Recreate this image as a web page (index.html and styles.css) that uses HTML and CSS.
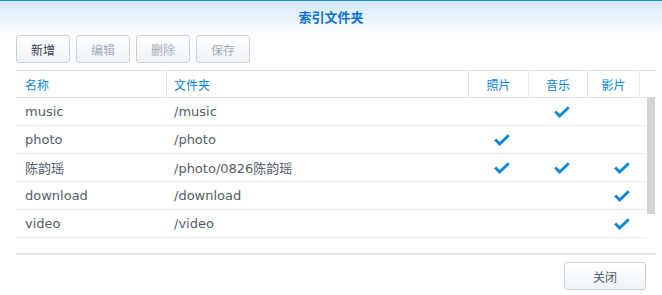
FILE: index.html
```html
<!DOCTYPE html>
<html lang="zh-CN">
<head>
    <meta charset="UTF-8">
    <title>索引文件夹</title>
    <link rel="stylesheet" href="styles.css">
</head>
<body>
    <div class="dialog">
        <div class="dialog-title">索引文件夹</div>
        <div class="toolbar">
            <button class="btn">新增</button>
            <button class="btn" disabled>编辑</button>
            <button class="btn" disabled>删除</button>
            <button class="btn" disabled>保存</button>
        </div>
        <div class="grid">
            <div class="grid-head">
                <div class="cell col-name">名称</div>
                <div class="cell col-folder">文件夹</div>
                <div class="cell col-photo center">照片</div>
                <div class="cell col-music center">音乐</div>
                <div class="cell col-video center">影片</div>
                <div class="cell col-fill"></div>
            </div>
            <div class="grid-body">
                <div class="rows" id="rows"></div>
                <div class="scroll-track"><div class="scroll-thumb"></div></div>
            </div>
        </div>
        <div class="footer">
            <button class="btn btn-wide">关闭</button>
        </div>
    </div>
    <script>
        const folders = [
            { name: 'music', path: '/music', photo: false, music: true, video: false },
            { name: 'photo', path: '/photo', photo: true, music: false, video: false },
            { name: '陈韵瑶', path: '/photo/0826陈韵瑶', photo: true, music: true, video: true },
            { name: 'download', path: '/download', photo: false, music: false, video: true },
            { name: 'video', path: '/video', photo: false, music: false, video: true }
        ];
        const tick = '<svg class="tick" width="16" height="12" viewBox="0 0 16 12"><polyline points="1.2,5.6 5.6,10 14.8,1.2" fill="none" stroke="#0a84e0" stroke-width="2.8" stroke-linejoin="miter"/></svg>';
        const rows = document.getElementById('rows');
        folders.forEach(f => {
            const row = document.createElement('div');
            row.className = 'row';
            row.innerHTML = `<div class="cell col-name">${f.name}</div>` +
                `<div class="cell col-folder">${f.path}</div>` +
                `<div class="cell col-photo check">${f.photo ? tick : ''}</div>` +
                `<div class="cell col-music check">${f.music ? tick : ''}</div>` +
                `<div class="cell col-video check">${f.video ? tick : ''}</div>`;
            rows.appendChild(row);
        });
    </script>
</body>
</html>
```

FILE: styles.css
```css
body {
    margin: 0;
    font-family: 'DejaVu Sans', 'Noto Sans CJK SC', sans-serif;
    font-size: 13px;
    color: #535d68;
    background: #fff;
}
.dialog {
    width: 662px;
    height: 295px;
    border-top: 1px solid #1a8ae0;
    box-sizing: border-box;
    background: linear-gradient(180deg, #d5e8fa 0px, #ffffff 34px, #ffffff 100%);
}
.dialog-title {
    height: 33px;
    line-height: 32px;
    text-align: center;
    font-family: 'Noto Sans CJK SC', sans-serif;
    font-size: 13px;
    font-weight: 700;
    color: #0a72d2;
}
.toolbar {
    display: flex;
    gap: 6px;
    padding: 1px 16px 0 16px;
}
.btn {
    width: 54px;
    height: 28px;
    padding: 0;
    border: 1px solid #c6d0da;
    border-radius: 3px;
    background: linear-gradient(180deg, #ffffff 0%, #edf3f9 100%);
    font-family: 'Noto Sans CJK SC', sans-serif;
    font-size: 12px;
    color: #36404a;
}
.btn:disabled {
    color: #a3acb6;
}
.btn-wide {
    width: 82px;
    color: #505a64;
}
.grid {
    margin: 7px 6px 0 16px;
}
.grid-head {
    display: flex;
    height: 26px;
    border-top: 1px solid #d9e3ed;
    border-bottom: 1px solid #d9e3ed;
    color: #0a84e0;
    font-family: 'Noto Sans CJK SC', sans-serif;
    font-size: 12px;
}
.grid-head .cell {
    border-right: 1px solid #dde7f1;
}
.grid-head .col-fill {
    border-right: none;
}
.cell {
    box-sizing: border-box;
    display: flex;
    align-items: center;
    padding-left: 9px;
    white-space: nowrap;
}
.center {
    justify-content: center;
    padding-left: 0;
}
.check {
    padding-left: 25px;
}
.col-name { width: 151px; }
.col-folder { width: 302px; padding-left: 7px; }
.col-photo { width: 60px; }
.col-music { width: 59px; }
.col-video { width: 52px; }
.row .col-video { padding-left: 26px; }
.col-fill { flex: 1; }
.grid-body {
    display: flex;
    align-items: flex-start;
}
.rows {
    width: 630px;
}
.row {
    display: flex;
    height: 27px;
    border-bottom: 1px solid #e6edf4;
}
.tick {
    display: block;
}
.scroll-track {
    margin-left: 1px;
    width: 8px;
}
.scroll-thumb {
    width: 8px;
    height: 116px;
    background: #d3d4d6;
}
.footer {
    margin: 15px 6px 0 16px;
    border-top: 1px solid #dcdcdc;
    box-shadow: inset 0 1px 0 #ededed;
    display: flex;
    justify-content: flex-end;
    padding: 8px 10px 0 0;
}
```
